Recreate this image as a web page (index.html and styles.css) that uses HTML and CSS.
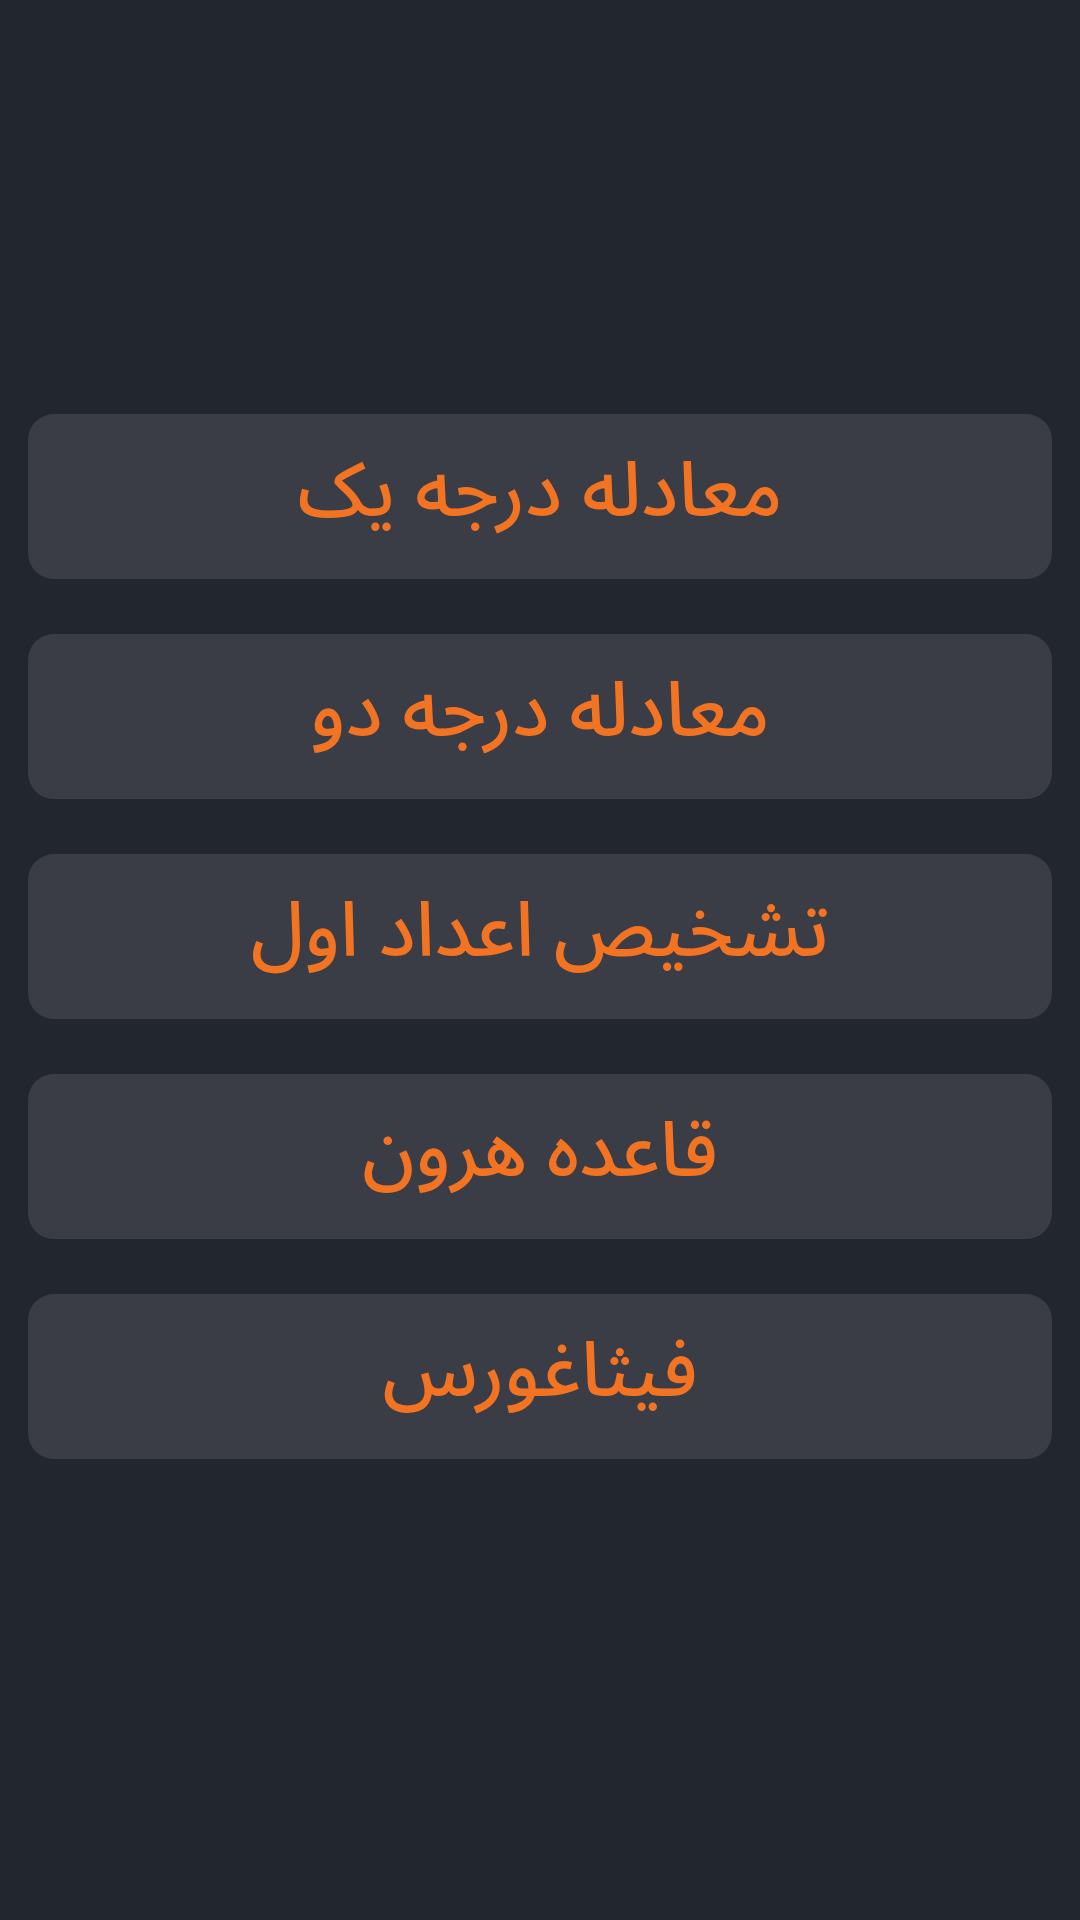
FILE: index.html
```html
<!DOCTYPE html>
<html lang="fa" dir="rtl">
<head>
  <meta charset="UTF-8">
  <title>ریاضی</title>
  <link rel="stylesheet" href="styles.css">
</head>
<body>
  <div class="menu">
    <button class="item">معادله درجه یک</button>
    <button class="item">معادله درجه دو</button>
    <button class="item">تشخیص اعداد اول</button>
    <button class="item">قاعده هرون</button>
    <button class="item">فیثاغورس</button>
  </div>
</body>
</html>
```

FILE: styles.css
```css
html, body {
  margin: 0;
  height: 100%;
}
body {
  background: #22272f;
  font-family: 'Noto Sans Arabic', 'Noto Sans', serif;
}
.menu {
  display: flex;
  flex-direction: column;
  gap: 55px;
  padding: 414px 28px 0;
}
.item {
  height: 165px;
  border: none;
  border-radius: 26px;
  background: #3a3d46;
  color: #f27322;
  font-family: inherit;
  font-size: 76px;
  font-weight: 500;
  display: flex;
  align-items: center;
  justify-content: center;
  padding: 0 0 10px;
}
```
